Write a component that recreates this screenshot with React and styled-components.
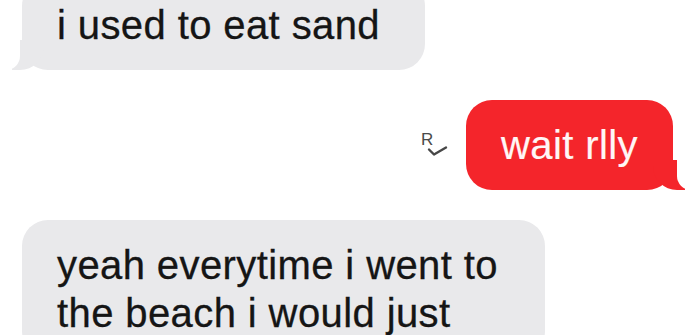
import React from "react";
import styled, { createGlobalStyle, css } from "styled-components";

const GlobalStyle = createGlobalStyle`
  html, body {
    margin: 0;
    padding: 0;
    background: #ffffff;
    overflow: hidden;
  }
  body {
    font-family: "Liberation Sans", Arial, Helvetica, sans-serif;
  }
`;

const GRAY = "#e9e9eb";
const RED = "#f4252b";

const Thread = styled.div`
  display: flex;
  flex-direction: column;
  gap: 30px;
  margin-top: -20px;
  padding: 0 27px 0 22px;
`;

const Row = styled.div`
  display: flex;
  align-items: center;
  justify-content: ${(p) => (p.$out ? "flex-end" : "flex-start")};
  gap: 17px;
`;

const tailIn = css`
  &::before {
    content: "";
    position: absolute;
    bottom: 0;
    left: -10px;
    width: 32px;
    height: 30px;
    background: ${GRAY};
    border-bottom-right-radius: 24px;
  }
  &::after {
    content: "";
    position: absolute;
    bottom: 0;
    left: -22px;
    width: 20px;
    height: 30px;
    background: #ffffff;
    border-bottom-right-radius: 14px;
  }
`;

const tailOut = css`
  &::before {
    content: "";
    position: absolute;
    bottom: 0;
    right: -12px;
    width: 32px;
    height: 30px;
    background: ${RED};
    border-bottom-left-radius: 24px;
  }
  &::after {
    content: "";
    position: absolute;
    bottom: 0;
    right: -24px;
    width: 20px;
    height: 30px;
    background: #ffffff;
    border-bottom-left-radius: 14px;
  }
`;

const Bubble = styled.div`
  position: relative;
  box-sizing: border-box;
  padding: 21px 35px;
  border-radius: 26px;
  font-size: 40px;
  line-height: 48px;
  letter-spacing: 0.4px;
  white-space: nowrap;
  background: ${(p) => (p.$out ? RED : GRAY)};
  color: ${(p) => (p.$out ? "#fff6f6" : "#151515")};
  -webkit-text-stroke: ${(p) => (p.$out ? "0.2px #fff6f6" : "0.3px #151515")};
  ${(p) => p.$width && `width: ${p.$width}px;`}
  ${(p) => (p.$tail ? (p.$out ? tailOut : tailIn) : "")}
`;

const Receipt = styled.div`
  display: flex;
  flex-direction: column;
  align-items: flex-start;
  width: 28px;
  color: #4a4a4a;
`;

const ReceiptLetter = styled.span`
  font-size: 17px;
  line-height: 13px;
  font-weight: 400;
`;

const ReceiptCheck = styled.svg`
  display: block;
  margin-left: 5px;
  margin-top: -1px;
`;

function ReadReceipt() {
  return (
    <Receipt>
      <ReceiptLetter>R</ReceiptLetter>
      <ReceiptCheck width="22" height="12" viewBox="0 0 22 12">
        <path
          d="M3 4.5 L8 9.5 L20 2.5"
          fill="none"
          stroke="#474747"
          strokeWidth="2.4"
          strokeLinecap="round"
          strokeLinejoin="round"
        />
      </ReceiptCheck>
    </Receipt>
  );
}

export default function App() {
  return (
    <>
      <GlobalStyle />
      <Thread>
        <Row>
          <Bubble $tail $width={403}>i used to eat sand</Bubble>
        </Row>
        <Row $out>
          <ReadReceipt />
          <Bubble $out $tail>wait rlly</Bubble>
        </Row>
        <Row>
          <Bubble $width={523}>
            yeah everytime i went to
            <br />
            the beach i would just
          </Bubble>
        </Row>
      </Thread>
    </>
  );
}
